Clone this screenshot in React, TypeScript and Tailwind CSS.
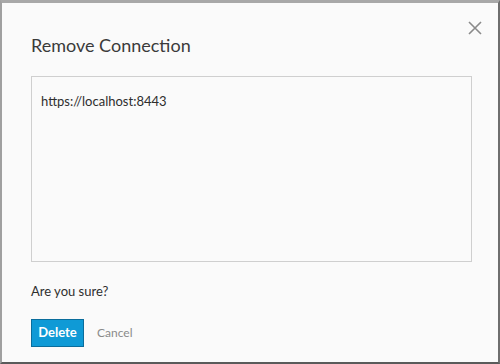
import React from 'react';

const font = { fontFamily: '"Lato", "Open Sans", sans-serif' };

const CloseIcon = () => (
  <svg width="14" height="14" viewBox="0 0 14 14" className="text-[#8a8a8a]">
    <path d="M1 1 L13 13 M13 1 L1 13" stroke="currentColor" strokeWidth="1.6" />
  </svg>
);

export default function App() {
  return (
    <div
      className="relative w-[500px] h-[364px] bg-[#fafafa] border-l-2 border-t-[3px] border-r-2 border-b-2 border-l-[#a0a0a0] border-t-[#a8a8a8] border-r-[#6e6e6e] border-b-[#5a5a5a] flex flex-col pl-[29px] pr-[26px]"
      style={font}
    >
      <button className="absolute right-[16px] top-[18px] p-0">
        <CloseIcon />
      </button>
      <h2 className="mt-[30px] text-[18px] leading-6 text-[#3a3a3a]">Remove Connection</h2>
      <div className="mt-[19px] h-[186px] border border-[#cfcfcf] bg-[#fafafa] px-[9px] pt-[15px] text-[13px] text-[#2e2e2e]">
        https://localhost:8443
      </div>
      <p className="mt-[19px] text-[13px] leading-5 text-[#2e2e2e]">Are you sure?</p>
      <div className="mt-[18px] flex items-center gap-[13px]">
        <button className="h-[28px] w-[53px] bg-[#0f9ad6] border border-[#0a6d9c] text-white text-[13px] font-bold">
          Delete
        </button>
        <button className="text-[12px] text-[#8a8a8a]">Cancel</button>
      </div>
    </div>
  );
}
